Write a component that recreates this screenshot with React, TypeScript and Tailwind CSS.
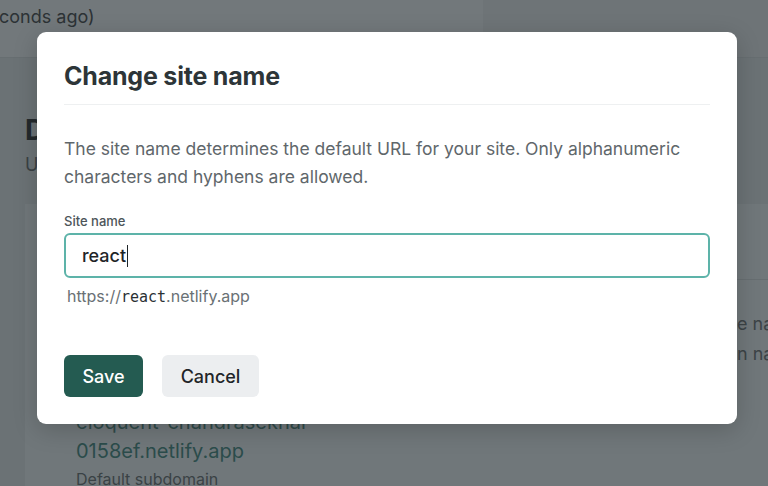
import React, { useState } from 'react';

const font = { fontFamily: 'Inter, "Noto Sans", sans-serif' };

const BackgroundPage: React.FC = () => (
  <div className="flex h-full w-full flex-col bg-[#6b7275]">
    {/* Top bar (dimmed) */}
    <div className="flex h-[58px] shrink-0 border-b border-[#676e71]">
      <div className="flex w-[483px] items-start bg-[#72787b] pt-[5px] text-[18px] leading-[24px] text-[#2c3235]">
        <span className="-ml-[1px]">conds ago)</span>
      </div>
      <div className="flex-1 bg-[#6e7477]" />
    </div>

    {/* Main content (dimmed, mostly behind the dialog) */}
    <div className="flex flex-1 flex-col pl-[25px]">
      <div className="w-[12px] overflow-hidden whitespace-nowrap">
        <h2 className="mt-[55px] text-[28px] font-bold leading-[34px] text-[#23292c]">D</h2>
        <p className="mt-[6px] text-[18px] leading-[24px] text-[#3a4144]">U</p>
      </div>

      <div className="mt-[27px] flex flex-1 bg-[#70777a]">
        <div className="-mb-[6px] flex flex-col justify-end pl-[51px]">
          <div className="text-[20px] leading-[28px] text-[#2f4a49]">eloquent-chandrasekhar</div>
          <div className="text-[20px] leading-[30px] text-[#2b4c4b]">0158ef.netlify.app</div>
          <div className="text-[16px] leading-[26px] text-[#3a4245]">Default subdomain</div>
        </div>
        <div className="ml-auto flex w-[31px] flex-col overflow-hidden">
          <div className="mt-[75px] h-px bg-[#676e71]" />
          <div className="mt-[29px] whitespace-nowrap text-[18px] leading-[30px] text-[#3c4346]">e na</div>
          <div className="whitespace-nowrap text-[18px] leading-[30px] text-[#3c4346]">n na</div>
        </div>
      </div>
    </div>
  </div>
);

const ChangeSiteNameModal: React.FC = () => {
  const [name, setName] = useState('react');

  return (
    <div className="absolute left-[37px] top-[32px] w-[700px] rounded-[9px] bg-white px-[27px] pb-[27px] pt-[28px] shadow-[0_6px_24px_rgba(0,0,0,0.18)]">
      {/* Header */}
      <h1 className="border-b border-[#eef0f1] pb-[12px] text-[25px] font-bold leading-[32px] tracking-[-0.2px] text-[#2d3538]">
        Change site name
      </h1>

      {/* Body */}
      <p className="mt-[30px] text-[17.5px] leading-[28px] text-[#5f676b]">
        The site name determines the default URL for your site. Only alphanumeric characters and hyphens are allowed.
      </p>

      <label className="mt-[21px] block text-[13px] font-medium leading-[18px] text-[#4d5559]">Site name</label>
      <div className="mt-[3px] flex h-[45px] items-center rounded-[6px] border-2 border-[#5db3a9] px-[16px]">
        <span className="text-[18px] font-medium text-[#1f2528]">{name}</span>
        <span className="ml-[1px] h-[22px] w-px bg-[#1f2528]" />
        <input className="sr-only" value={name} onChange={(e) => setName(e.target.value)} />
      </div>
      <div className="mt-[8px] h-[20px] pl-[3px] text-[16px] leading-[20px] text-[#6a7175]">
        https://
        <span className="text-[15px] text-[#2a3134]" style={{ fontFamily: '"DejaVu Sans Mono", monospace' }}>
          {name}
        </span>
        .netlify.app
      </div>

      {/* Actions */}
      <div className="mt-[49px] flex gap-[19px]">
        <button className="h-[42px] w-[79px] rounded-[6px] bg-[#245b51] text-[18px] font-medium text-white">Save</button>
        <button className="h-[42px] w-[97px] rounded-[6px] bg-[#eceef0] text-[18px] font-medium text-[#1f2528]">Cancel</button>
      </div>
    </div>
  );
};

export default function App() {
  return (
    <div className="relative h-[486px] w-[768px] overflow-hidden" style={font}>
      <BackgroundPage />
      <ChangeSiteNameModal />
    </div>
  );
}
